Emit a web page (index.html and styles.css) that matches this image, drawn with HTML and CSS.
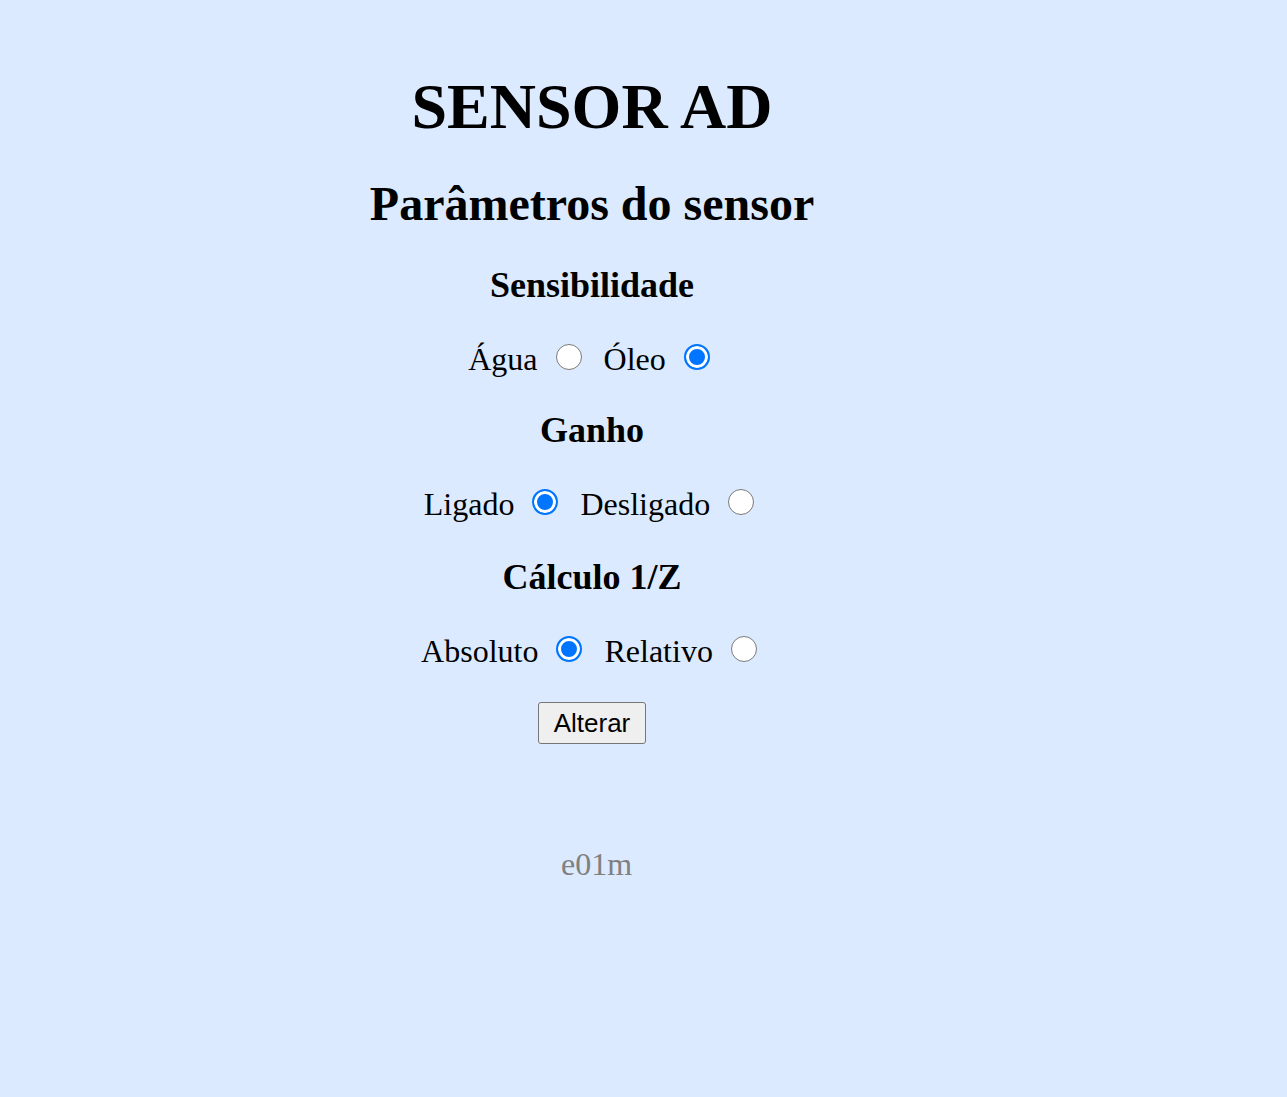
FILE: index.html
```html
<!DOCTYPE html>
<html lang="pt">
<head>
<meta charset="utf-8">
<title>SENSOR AD</title>
<link rel="stylesheet" href="styles.css">
</head>
<body>
<main class="page">
  <h1 class="title">SENSOR AD</h1>
  <h2 class="subtitle">Parâmetros do sensor</h2>
  <form class="params">
    <h3 class="group-title">Sensibilidade</h3>
    <p class="options">Água <input class="radio" type="radio" name="sens" value="agua"> &nbsp;Óleo <input class="radio" type="radio" name="sens" value="oleo" checked></p>
    <h3 class="group-title">Ganho</h3>
    <p class="options">Ligado <input class="radio" type="radio" name="ganho" value="on" checked> &nbsp;Desligado <input class="radio" type="radio" name="ganho" value="off"></p>
    <h3 class="group-title group-title--last">Cálculo 1/Z</h3>
    <p class="options">Absoluto <input class="radio" type="radio" name="calc" value="abs" checked> &nbsp;Relativo <input class="radio" type="radio" name="calc" value="rel"></p>
    <button class="submit" type="button">Alterar</button>
  </form>
  <p class="footer">e01m</p>
</main>
</body>
</html>
```

FILE: styles.css
```css
html, body {
  margin: 0;
  padding: 0;
  background: #dbeafe;
}

body {
  font-family: "Liberation Serif", "Times New Roman", serif;
  color: #000;
}

.page {
  width: 1184px;
  padding-top: 70px;
  display: flex;
  flex-direction: column;
  align-items: center;
  gap: 32px;
  text-align: center;
}

.title {
  margin: 0;
  font-size: 64px;
  line-height: 74px;
  font-weight: bold;
}

.subtitle {
  margin: 0;
  font-size: 48px;
  line-height: 56px;
  font-weight: bold;
}

.params {
  margin: 0;
  display: flex;
  flex-direction: column;
  align-items: center;
  gap: 32px;
}

.group-title {
  margin: 0;
  font-size: 36px;
  line-height: 42px;
  font-weight: bold;
}

.group-title--last {
  margin-top: 2px;
}

.options {
  margin: 0;
  font-size: 32px;
  line-height: 36px;
  white-space: nowrap;
}

.radio {
  -webkit-appearance: none;
  appearance: none;
  box-sizing: border-box;
  display: inline-block;
  width: 26px;
  height: 26px;
  margin: 6px 6px 0 10px;
  vertical-align: baseline;
  border: 1px solid #7a7a7a;
  border-radius: 50%;
  background: #fff;
}

.radio:checked {
  border: 2px solid #0075ff;
  background: #0075ff;
  box-shadow: inset 0 0 0 3px #fff;
}

.submit {
  margin-top: 1px;
  width: 108px;
  height: 42px;
  padding: 0 12px;
  font-family: "Liberation Sans", Arial, sans-serif;
  font-size: 26px;
  color: #000;
  background: #efefef;
  border: 1px solid #767676;
  border-radius: 3px;
}

.footer {
  margin: 70px 0 0;
  padding-left: 9px;
  font-size: 32px;
  line-height: 36px;
  color: #808080;
}
```
